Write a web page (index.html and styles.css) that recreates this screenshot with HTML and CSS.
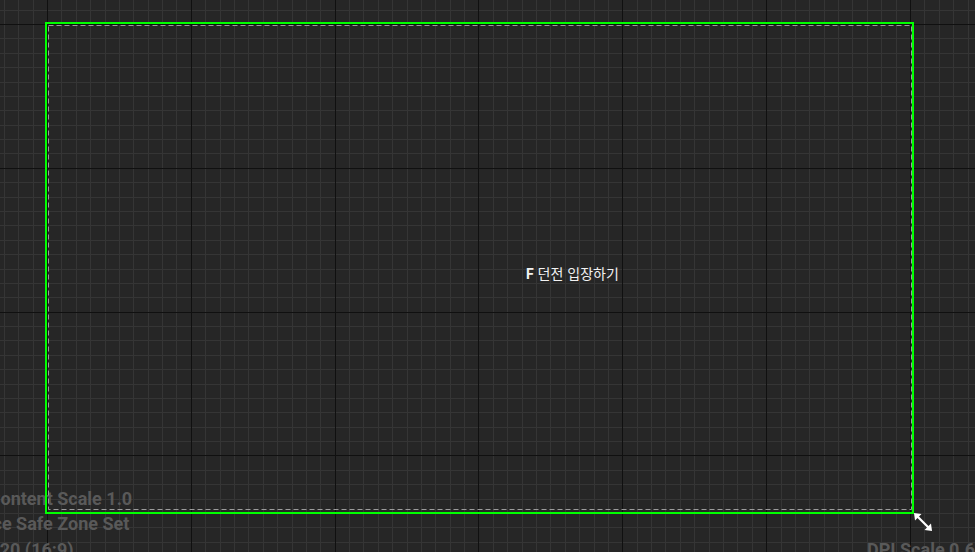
FILE: index.html
```html
<!DOCTYPE html>
<html lang="ko">
<head>
<meta charset="utf-8">
<title>Designer</title>
<link rel="stylesheet" href="styles.css">
</head>
<body>
<div class="canvas">
  <div class="info info-left">
    <div class="info-line">Device Content Scale 1.0</div>
    <div class="info-line">No Device Safe Zone Set</div>
    <div class="info-line">1280 x 720 (16:9)</div>
  </div>
  <div class="info info-right">DPI Scale 0.67</div>
  <div class="frame">
    <svg class="safe-zone" width="865" height="488" viewBox="0 0 865 488">
      <rect x="1.5" y="1.5" width="863" height="484" fill="none" stroke="#9c9c9c" stroke-width="1" stroke-dasharray="5 3"/>
    </svg>
    <div class="widget"><span class="key">F</span> 던전 입장하기</div>
  </div>
  <svg class="resize" width="20" height="20" viewBox="0 0 20 20">
    <line x1="4" y1="4" x2="16" y2="16" stroke="#ffffff" stroke-width="2.2"/>
    <polygon points="1,1 8.5,2 2,8.5" fill="#ffffff"/>
    <polygon points="19,19 11.5,18 18,11.5" fill="#ffffff"/>
  </svg>
</div>
</body>
</html>
```
FILE: styles.css
```css
html, body {
  margin: 0;
  padding: 0;
  background: #262626;
}

.canvas {
  position: relative;
  width: 975px;
  height: 552px;
  overflow: hidden;
  display: flex;
  flex-direction: column;
  align-items: flex-start;
  background-color: #262626;
  background-image:
    repeating-linear-gradient(to right, #101010 47px, #101010 48px, transparent 48px, transparent 190.83px),
    repeating-linear-gradient(to bottom, #101010 24px, #101010 25px, transparent 25px, transparent 167.83px),
    repeating-linear-gradient(to right, #353535 47px, #353535 48px, transparent 48px, transparent 61.383px),
    repeating-linear-gradient(to bottom, #353535 24px, #353535 25px, transparent 25px, transparent 38.383px);
}

.info {
  position: absolute;
  font-family: Roboto, "Liberation Sans", sans-serif;
  font-weight: 700;
  font-size: 18px;
  line-height: 25.3px;
  color: #595959;
  white-space: nowrap;
}

.info-left {
  left: -70px;
  top: 486px;
}

.info-right {
  left: 867px;
  top: 536.6px;
}

.frame {
  position: relative;
  box-sizing: border-box;
  width: 869px;
  height: 492px;
  margin: 22px 0 0 45px;
  border: 2px solid #00ff00;
}

.safe-zone {
  position: absolute;
  left: 0;
  top: 0;
  display: block;
}

.widget {
  position: absolute;
  left: 479px;
  top: 241px;
  font-family: "Noto Sans CJK KR", "Noto Sans", sans-serif;
  font-size: 14px;
  line-height: 17px;
  color: #f2f2f2;
  white-space: nowrap;
}

.key {
  font-family: Roboto, "Liberation Sans", sans-serif;
  font-weight: 700;
}

.resize {
  position: absolute;
  left: 913px;
  top: 512px;
  display: block;
}
```
